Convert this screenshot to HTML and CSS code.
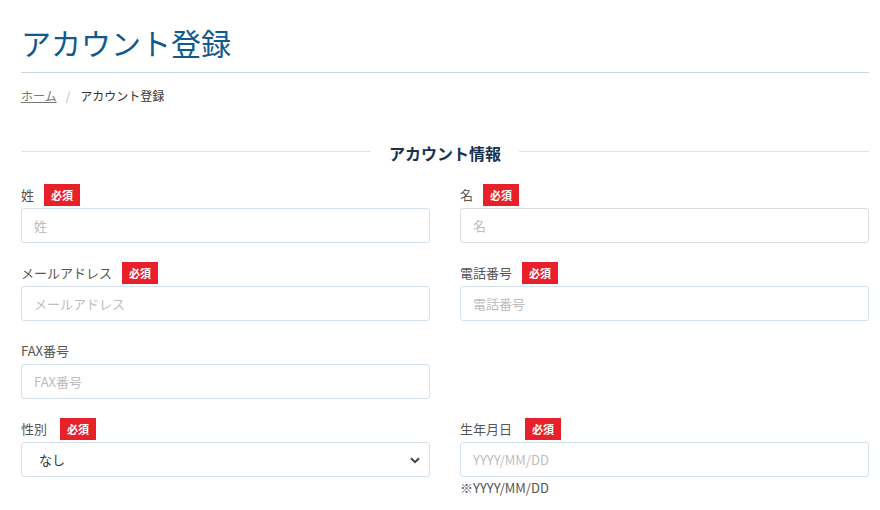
FILE: index.html
```html
<!DOCTYPE html>
<html lang="ja">

<head>
    <meta charset="UTF-8">
    <meta name="viewport" content="width=device-width, initial-scale=1.0">
    <title>アカウント登録</title>
    <link rel="stylesheet" href="styles.css">
</head>

<body>
    <div class="page">
        <h1 class="page-title">アカウント登録</h1>

        <ul class="crumbs">
            <li><a href="javascript:;">ホーム</a></li>
            <li class="sep">/</li>
            <li class="current">アカウント登録</li>
        </ul>

        <h2 class="section-title"><span>アカウント情報</span></h2>

        <div class="form-grid">
            <div class="field">
                <div class="label">姓<span class="req">必須</span></div>
                <input class="input" type="text" placeholder="姓">
            </div>
            <div class="field">
                <div class="label">名<span class="req">必須</span></div>
                <input class="input input-focus" type="text" placeholder="名">
            </div>
            <div class="field">
                <div class="label">メールアドレス<span class="req">必須</span></div>
                <input class="input" type="text" placeholder="メールアドレス">
            </div>
            <div class="field">
                <div class="label">電話番号<span class="req">必須</span></div>
                <input class="input" type="text" placeholder="電話番号">
            </div>
            <div class="field">
                <div class="label">FAX番号</div>
                <input class="input" type="text" placeholder="FAX番号">
            </div>
            <div class="field"></div>
            <div class="field">
                <div class="label">性別<span class="req req-wide">必須</span></div>
                <div class="select-wrap">
                    <select class="input select">
                        <option>なし</option>
                        <option>男性</option>
                        <option>女性</option>
                    </select>
                    <svg class="chev" width="10" height="7" viewBox="0 0 10 7">
                        <path d="M1 1.2 L5 5.2 L9 1.2" fill="none" stroke="#444" stroke-width="2" />
                    </svg>
                </div>
            </div>
            <div class="field">
                <div class="label">生年月日<span class="req req-wide">必須</span></div>
                <input class="input" type="text" placeholder="YYYY/MM/DD">
                <div class="note">※YYYY/MM/DD</div>
            </div>
        </div>
    </div>
</body>

</html>
```

FILE: styles.css
```css
* {
    box-sizing: border-box;
}

body {
    margin: 0;
    background: #fff;
    font-family: "Noto Sans CJK JP", "Noto Sans", sans-serif;
    color: #333;
}

ul,
li {
    list-style: none;
    margin: 0;
    padding: 0;
}

.page {
    width: 848px;
    margin: 0 0 0 21px;
}

.page-title {
    margin: 22px 0 0;
    padding-bottom: 10px;
    font-size: 30px;
    line-height: 40px;
    font-weight: 400;
    color: #115a8d;
    border-bottom: 1px solid #c9d7e1;
}

.crumbs {
    display: flex;
    margin-top: 14px;
    font-size: 12px;
    line-height: 18px;
}

.crumbs a {
    color: #777;
    text-decoration: underline;
}

.crumbs .sep {
    color: #bbb;
    margin: 0 10px 0 9px;
}

.crumbs .current {
    color: #333;
}

.section-title {
    display: flex;
    align-items: center;
    margin: 36px 0 0;
    font-size: 16px;
    line-height: 24px;
    font-weight: 700;
    color: #17324f;
}

.section-title::before,
.section-title::after {
    content: "";
    flex: 1;
    height: 1px;
    background: #dde3e8;
    margin-top: -3px;
}

.section-title span {
    padding: 0 18px;
}

.form-grid {
    display: grid;
    grid-template-columns: 1fr 1fr;
    column-gap: 30px;
    row-gap: 18px;
    margin-top: 18px;
}

.label {
    display: flex;
    align-items: center;
    height: 23px;
    margin-bottom: 2px;
    font-size: 13px;
    color: #555;
}

.req {
    display: inline-block;
    margin-left: 10px;
    padding: 0 7px;
    height: 22px;
    line-height: 22px;
    background: #e8202a;
    color: #fff;
    font-size: 11px;
    font-weight: 700;
}

.req-wide {
    margin-left: 13px;
}

.input {
    display: block;
    width: 100%;
    height: 35px;
    padding: 0 12px;
    border: 1px solid #d4e0ea;
    border-radius: 3px;
    background: #fff;
    font-family: inherit;
    font-size: 13px;
    color: #333;
    outline: none;
}

.input::placeholder {
    color: #bdbdbd;
}

.input-focus {
    border-color: #dcdcdc;
}

.select-wrap {
    position: relative;
}

.select {
    appearance: none;
    -webkit-appearance: none;
    padding-left: 17px;
    font-size: 13px;
}

.chev {
    position: absolute;
    right: 10px;
    top: 15px;
    pointer-events: none;
}

.note {
    margin-top: 2px;
    font-size: 13px;
    line-height: 18px;
    color: #555;
}
```
